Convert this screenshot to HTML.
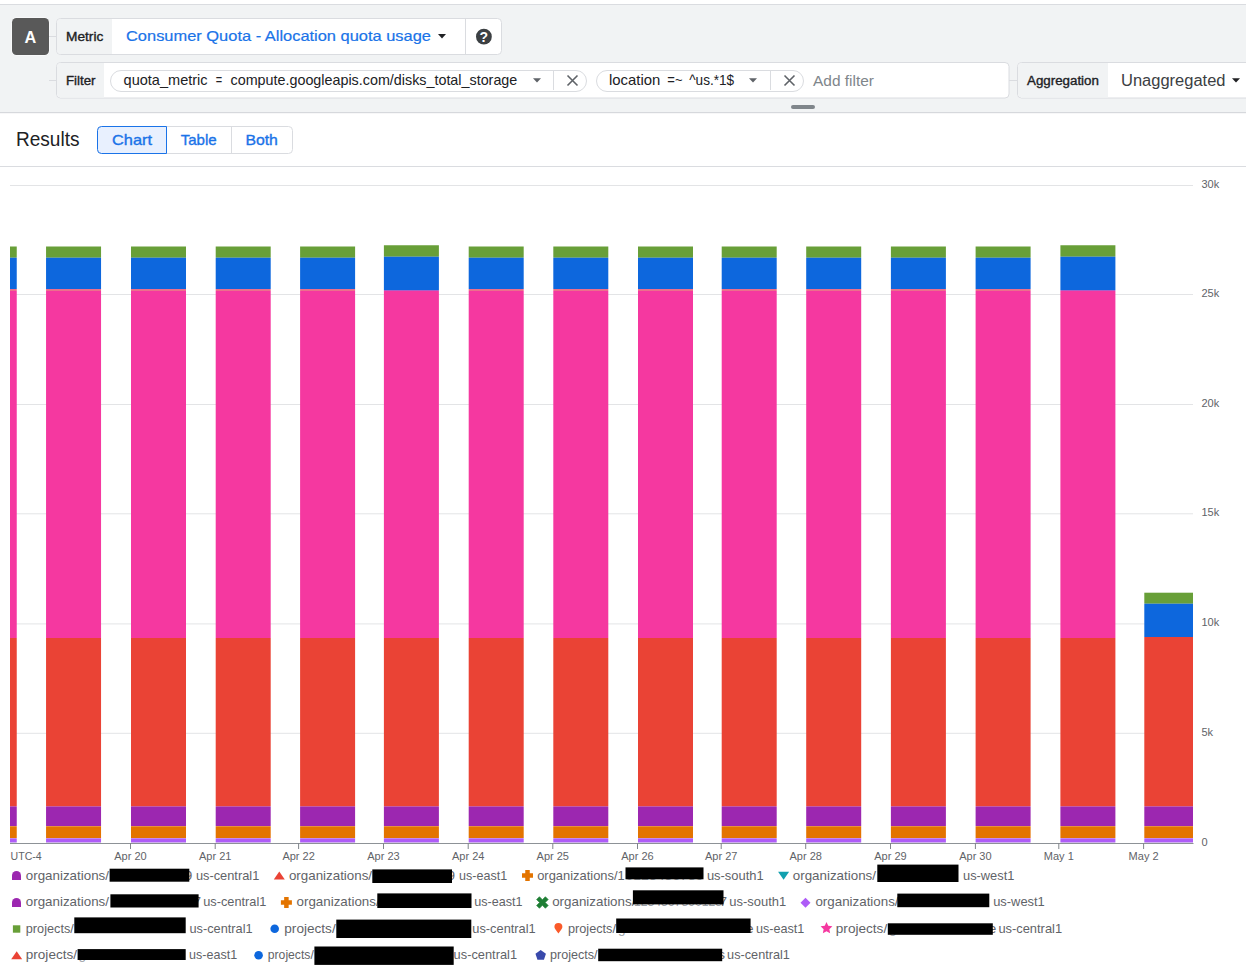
<!DOCTYPE html>
<html><head><meta charset="utf-8"><style>
html,body{margin:0;padding:0;background:#fff;width:1246px;height:969px;overflow:hidden}
svg{display:block;font-family:"Liberation Sans",sans-serif}
</style></head><body>
<svg width="1246" height="969" viewBox="0 0 1246 969">
<rect x="0" y="4" width="1246" height="1" fill="#dadce0" />
<rect x="0" y="5" width="1246" height="107" fill="#f1f3f4" />
<rect x="0" y="112" width="1246" height="1.2" fill="#d6d8dc" />
<rect x="11.5" y="17.5" width="38" height="38" rx="5" fill="#ffffff"/>
<rect x="12" y="18" width="37" height="37" fill="#595959" rx="4.5" />
<text x="30.4" y="42.7" font-size="16.3" fill="#ffffff" font-weight="700" text-anchor="middle">A</text>
<rect x="49" y="36" width="7" height="1" fill="#dadce0" />
<rect x="49" y="80" width="7" height="1" fill="#dadce0" />
<rect x="1009" y="80" width="8" height="1" fill="#dadce0" />
<rect x="56.5" y="18.5" width="445" height="36" rx="4" fill="#ffffff" stroke="#dadce0" stroke-width="1"/>
<path d="M61 19 H112 V54 H61 a4 4 0 0 1 -4 -4 V23 a4 4 0 0 1 4 -4z" fill="#f1f3f4"/>
<text x="66" y="41" font-size="12.6" fill="#202124" stroke="#202124" stroke-width="0.35" textLength="37.3" lengthAdjust="spacingAndGlyphs">Metric</text>
<text x="126" y="40.9" font-size="15" fill="#1a73e8" stroke="#1a73e8" stroke-width="0.2" textLength="305" lengthAdjust="spacingAndGlyphs">Consumer Quota - Allocation quota usage</text>
<path d="M438 34 L446 34 L442 38.5 Z" fill="#202124"/>
<rect x="465" y="19" width="1" height="35" fill="#dadce0" />
<circle cx="483.9" cy="36.7" r="7.9" fill="#3c4043"/>
<text x="483.9" y="42.3" font-size="14" fill="#ffffff" font-weight="700" text-anchor="middle">?</text>
<rect x="56.5" y="62.5" width="952.5" height="35.5" rx="4" fill="#ffffff" stroke="#dadce0" stroke-width="1"/>
<path d="M61 63 H104 V97.5 H61 a4 4 0 0 1 -4 -4 V67 a4 4 0 0 1 4 -4z" fill="#f1f3f4"/>
<text x="66" y="85.2" font-size="12.3" fill="#202124" stroke="#202124" stroke-width="0.35" textLength="29.5" lengthAdjust="spacingAndGlyphs">Filter</text>
<rect x="110.5" y="70.5" width="476" height="21" rx="10.5" fill="#ffffff" stroke="#dadce0" stroke-width="1"/>
<text x="123.6" y="84.7" font-size="14.4" fill="#202124" textLength="84" lengthAdjust="spacingAndGlyphs">quota_metric</text>
<text x="215.8" y="84.7" font-size="14.4" fill="#202124" textLength="6.4" lengthAdjust="spacingAndGlyphs">=</text>
<text x="230.5" y="84.7" font-size="14.4" fill="#202124" textLength="286.8" lengthAdjust="spacingAndGlyphs">compute.googleapis.com/disks_total_storage</text>
<path d="M533 78.3 L541 78.3 L537 82.6 Z" fill="#5f6368"/>
<rect x="553" y="71" width="1" height="19" fill="#dadce0" />
<path d="M567.5 75.5 L577.5 85.5 M577.5 75.5 L567.5 85.5" stroke="#5f6368" stroke-width="1.6"/>
<rect x="596.5" y="70.5" width="207" height="21" rx="10.5" fill="#ffffff" stroke="#dadce0" stroke-width="1"/>
<text x="609" y="84.7" font-size="14.4" fill="#202124" textLength="51.3" lengthAdjust="spacingAndGlyphs">location</text>
<text x="667.3" y="84.7" font-size="14.4" fill="#202124" textLength="15.2" lengthAdjust="spacingAndGlyphs">=~</text>
<text x="689.2" y="84.7" font-size="14.4" fill="#202124" textLength="45" lengthAdjust="spacingAndGlyphs">^us.*1$</text>
<path d="M749 78.3 L757 78.3 L753 82.6 Z" fill="#5f6368"/>
<rect x="770" y="71" width="1" height="19" fill="#dadce0" />
<path d="M784.5 75.5 L794.5 85.5 M794.5 75.5 L784.5 85.5" stroke="#5f6368" stroke-width="1.6"/>
<text x="813" y="85.5" font-size="15.4" fill="#80868b" textLength="61" lengthAdjust="spacingAndGlyphs">Add filter</text>
<rect x="1017.5" y="62.5" width="300" height="35.5" rx="4" fill="#ffffff" stroke="#dadce0" stroke-width="1"/>
<path d="M1022 63 H1108 V97.5 H1022 a4 4 0 0 1 -4 -4 V67 a4 4 0 0 1 4 -4z" fill="#f1f3f4"/>
<text x="1027" y="85.2" font-size="12.3" fill="#202124" stroke="#202124" stroke-width="0.35" textLength="71.9" lengthAdjust="spacingAndGlyphs">Aggregation</text>
<text x="1121" y="86.2" font-size="16" fill="#3c4043" textLength="104.5" lengthAdjust="spacingAndGlyphs">Unaggregated</text>
<path d="M1232 78.3 L1240 78.3 L1236 82.6 Z" fill="#202124"/>
<rect x="791" y="105" width="24" height="4" fill="#80868b" rx="2" />
<text x="16" y="146" font-size="19.5" fill="#202124" textLength="63.5" lengthAdjust="spacingAndGlyphs">Results</text>
<rect x="97.5" y="126.5" width="195" height="27" rx="4" fill="#ffffff" stroke="#dadce0" stroke-width="1"/>
<rect x="231" y="127" width="1" height="26" fill="#dadce0" />
<path d="M101.5 126.5 H166.5 V153.5 H101.5 a4 4 0 0 1 -4 -4 V130.5 a4 4 0 0 1 4 -4z" fill="#e8f0fe" stroke="#1a73e8" stroke-width="1"/>
<text x="112" y="145" font-size="14.8" fill="#1a73e8" stroke="#1a73e8" stroke-width="0.35" textLength="40" lengthAdjust="spacingAndGlyphs">Chart</text>
<text x="180.7" y="145" font-size="14.8" fill="#1a73e8" stroke="#1a73e8" stroke-width="0.35" textLength="36" lengthAdjust="spacingAndGlyphs">Table</text>
<text x="245.4" y="145" font-size="14.8" fill="#1a73e8" stroke="#1a73e8" stroke-width="0.35" textLength="32.5" lengthAdjust="spacingAndGlyphs">Both</text>
<rect x="0" y="166" width="1246" height="1" fill="#dadce0" />
<rect x="10" y="185.0" width="1183" height="1" fill="#e3e4e6" />
<rect x="10" y="294.0" width="1183" height="1" fill="#e3e4e6" />
<rect x="10" y="404.0" width="1183" height="1" fill="#e3e4e6" />
<rect x="10" y="513.3" width="1183" height="1" fill="#e3e4e6" />
<rect x="10" y="623.4" width="1183" height="1" fill="#e3e4e6" />
<rect x="10" y="732.8" width="1183" height="1" fill="#e3e4e6" />
<text x="1201.5" y="187.7" font-size="11" fill="#5f6368">30k</text>
<text x="1201.5" y="296.7" font-size="11" fill="#5f6368">25k</text>
<text x="1201.5" y="406.7" font-size="11" fill="#5f6368">20k</text>
<text x="1201.5" y="516.0" font-size="11" fill="#5f6368">15k</text>
<text x="1201.5" y="626.1" font-size="11" fill="#5f6368">10k</text>
<text x="1201.5" y="735.5" font-size="11" fill="#5f6368">5k</text>
<text x="1201.5" y="845.6" font-size="11" fill="#5f6368">0</text>
<defs><clipPath id="plot"><rect x="10" y="167" width="1183" height="676"/></clipPath></defs>
<g clip-path="url(#plot)">
<defs><linearGradient id="gN" gradientUnits="userSpaceOnUse" x1="0" y1="246.5" x2="0" y2="843"><stop offset="0.00000" stop-color="#689f38"/><stop offset="0.01760" stop-color="#689f38"/><stop offset="0.01760" stop-color="#6aa08c"/><stop offset="0.01928" stop-color="#6aa08c"/><stop offset="0.01928" stop-color="#0d67dd"/><stop offset="0.07158" stop-color="#0d67dd"/><stop offset="0.07158" stop-color="#ec6f8c"/><stop offset="0.07460" stop-color="#ec6f8c"/><stop offset="0.07460" stop-color="#f538a0"/><stop offset="0.65633" stop-color="#f538a0"/><stop offset="0.65633" stop-color="#ea4335"/><stop offset="0.93797" stop-color="#ea4335"/><stop offset="0.93797" stop-color="#c45aa8"/><stop offset="0.93931" stop-color="#c45aa8"/><stop offset="0.93931" stop-color="#9c27b0"/><stop offset="0.97150" stop-color="#9c27b0"/><stop offset="0.97150" stop-color="#e8903a"/><stop offset="0.97284" stop-color="#e8903a"/><stop offset="0.97284" stop-color="#e37400"/><stop offset="0.99162" stop-color="#e37400"/><stop offset="0.99162" stop-color="#c58af0"/><stop offset="0.99296" stop-color="#c58af0"/><stop offset="0.99296" stop-color="#ae5cf7"/><stop offset="0.99832" stop-color="#ae5cf7"/><stop offset="0.99832" stop-color="#cfaef0"/><stop offset="1.00000" stop-color="#cfaef0"/></linearGradient><linearGradient id="gT" gradientUnits="userSpaceOnUse" x1="0" y1="245.25" x2="0" y2="843"><stop offset="0.00000" stop-color="#689f38"/><stop offset="0.01798" stop-color="#689f38"/><stop offset="0.01798" stop-color="#6aa08c"/><stop offset="0.01966" stop-color="#6aa08c"/><stop offset="0.01966" stop-color="#0d67dd"/><stop offset="0.07403" stop-color="#0d67dd"/><stop offset="0.07403" stop-color="#a860c8"/><stop offset="0.07620" stop-color="#a860c8"/><stop offset="0.07620" stop-color="#f538a0"/><stop offset="0.65705" stop-color="#f538a0"/><stop offset="0.65705" stop-color="#ea4335"/><stop offset="0.93810" stop-color="#ea4335"/><stop offset="0.93810" stop-color="#c45aa8"/><stop offset="0.93944" stop-color="#c45aa8"/><stop offset="0.93944" stop-color="#9c27b0"/><stop offset="0.97156" stop-color="#9c27b0"/><stop offset="0.97156" stop-color="#e8903a"/><stop offset="0.97290" stop-color="#e8903a"/><stop offset="0.97290" stop-color="#e37400"/><stop offset="0.99164" stop-color="#e37400"/><stop offset="0.99164" stop-color="#c58af0"/><stop offset="0.99297" stop-color="#c58af0"/><stop offset="0.99297" stop-color="#ae5cf7"/><stop offset="0.99833" stop-color="#ae5cf7"/><stop offset="0.99833" stop-color="#cfaef0"/><stop offset="1.00000" stop-color="#cfaef0"/></linearGradient><linearGradient id="gM" gradientUnits="userSpaceOnUse" x1="0" y1="592.7" x2="0" y2="843"><stop offset="0.00000" stop-color="#689f38"/><stop offset="0.04115" stop-color="#689f38"/><stop offset="0.04115" stop-color="#6aa08c"/><stop offset="0.04515" stop-color="#6aa08c"/><stop offset="0.04515" stop-color="#0d67dd"/><stop offset="0.17539" stop-color="#0d67dd"/><stop offset="0.17539" stop-color="#ea4335"/><stop offset="0.85218" stop-color="#ea4335"/><stop offset="0.85218" stop-color="#c45aa8"/><stop offset="0.85537" stop-color="#c45aa8"/><stop offset="0.85537" stop-color="#9c27b0"/><stop offset="0.93208" stop-color="#9c27b0"/><stop offset="0.93208" stop-color="#e8903a"/><stop offset="0.93528" stop-color="#e8903a"/><stop offset="0.93528" stop-color="#e37400"/><stop offset="0.98002" stop-color="#e37400"/><stop offset="0.98002" stop-color="#c58af0"/><stop offset="0.98322" stop-color="#c58af0"/><stop offset="0.98322" stop-color="#ae5cf7"/><stop offset="0.99600" stop-color="#ae5cf7"/><stop offset="0.99600" stop-color="#cfaef0"/><stop offset="1.00000" stop-color="#cfaef0"/></linearGradient></defs>
<rect x="-38.25" y="246.5" width="55" height="596.5" fill="url(#gN)" />
<rect x="46.05" y="246.5" width="55" height="596.5" fill="url(#gN)" />
<rect x="131.0" y="246.5" width="55" height="596.5" fill="url(#gN)" />
<rect x="215.7" y="246.5" width="55" height="596.5" fill="url(#gN)" />
<rect x="300.1" y="246.5" width="55" height="596.5" fill="url(#gN)" />
<rect x="383.9" y="245.25" width="55" height="597.75" fill="url(#gT)" />
<rect x="468.7" y="246.5" width="55" height="596.5" fill="url(#gN)" />
<rect x="553.3" y="246.5" width="55" height="596.5" fill="url(#gN)" />
<rect x="638.0" y="246.5" width="55" height="596.5" fill="url(#gN)" />
<rect x="721.7" y="246.5" width="55" height="596.5" fill="url(#gN)" />
<rect x="806.2" y="246.5" width="55" height="596.5" fill="url(#gN)" />
<rect x="890.9" y="246.5" width="55" height="596.5" fill="url(#gN)" />
<rect x="975.6" y="246.5" width="55" height="596.5" fill="url(#gN)" />
<rect x="1060.4" y="245.25" width="55" height="597.75" fill="url(#gT)" />
<rect x="1144.3" y="592.7" width="55" height="250.3" fill="url(#gM)" />
</g>
<rect x="10" y="843" width="1183.5" height="1" fill="#8d9297" />
<rect x="130.0" y="843" width="1" height="6" fill="#80868b" />
<text x="130.5" y="860" font-size="11" fill="#5f6368" text-anchor="middle">Apr 20</text>
<rect x="214.7" y="843" width="1" height="6" fill="#80868b" />
<text x="215.2" y="860" font-size="11" fill="#5f6368" text-anchor="middle">Apr 21</text>
<rect x="298.1" y="843" width="1" height="6" fill="#80868b" />
<text x="298.6" y="860" font-size="11" fill="#5f6368" text-anchor="middle">Apr 22</text>
<rect x="383.0" y="843" width="1" height="6" fill="#80868b" />
<text x="383.5" y="860" font-size="11" fill="#5f6368" text-anchor="middle">Apr 23</text>
<rect x="467.7" y="843" width="1" height="6" fill="#80868b" />
<text x="468.2" y="860" font-size="11" fill="#5f6368" text-anchor="middle">Apr 24</text>
<rect x="552.3" y="843" width="1" height="6" fill="#80868b" />
<text x="552.8" y="860" font-size="11" fill="#5f6368" text-anchor="middle">Apr 25</text>
<rect x="637.0" y="843" width="1" height="6" fill="#80868b" />
<text x="637.5" y="860" font-size="11" fill="#5f6368" text-anchor="middle">Apr 26</text>
<rect x="720.7" y="843" width="1" height="6" fill="#80868b" />
<text x="721.2" y="860" font-size="11" fill="#5f6368" text-anchor="middle">Apr 27</text>
<rect x="805.2" y="843" width="1" height="6" fill="#80868b" />
<text x="805.7" y="860" font-size="11" fill="#5f6368" text-anchor="middle">Apr 28</text>
<rect x="890.0" y="843" width="1" height="6" fill="#80868b" />
<text x="890.5" y="860" font-size="11" fill="#5f6368" text-anchor="middle">Apr 29</text>
<rect x="974.9" y="843" width="1" height="6" fill="#80868b" />
<text x="975.4" y="860" font-size="11" fill="#5f6368" text-anchor="middle">Apr 30</text>
<rect x="1058.3" y="843" width="1" height="6" fill="#80868b" />
<text x="1058.8" y="860" font-size="11" fill="#5f6368" text-anchor="middle">May 1</text>
<rect x="1143.1" y="843" width="1" height="6" fill="#80868b" />
<text x="1143.6" y="860" font-size="11" fill="#5f6368" text-anchor="middle">May 2</text>
<text x="10.6" y="860" font-size="11" fill="#5f6368" textLength="31.1" lengthAdjust="spacingAndGlyphs">UTC-4</text>
<path d="M12.0 880.0 V875.5 a4.5 4.5 0 0 1 9 0 V880.0 Z" fill="#9c27b0"/>
<text x="25.8" y="880" font-size="13.5" fill="#5f6368" textLength="83.2" lengthAdjust="spacingAndGlyphs">organizations/</text>
<text x="184.8" y="880" font-size="13.5" fill="#5f6368">9</text>
<rect x="109.6" y="868.7" width="79.7" height="13.0" fill="#000000" />
<text x="195.9" y="880" font-size="13.5" fill="#5f6368" textLength="63.4" lengthAdjust="spacingAndGlyphs">us-central1</text>
<path d="M273.8 879.6 L284.8 879.6 L279.3 871.6 Z" fill="#ea4335"/>
<text x="288.9" y="880" font-size="13.5" fill="#5f6368" textLength="83.2" lengthAdjust="spacingAndGlyphs">organizations/</text>
<text x="447.5" y="880" font-size="13.5" fill="#5f6368">9</text>
<rect x="372.3" y="869.4" width="79.7" height="13.6" fill="#000000" />
<text x="459.1" y="880" font-size="13.5" fill="#5f6368" textLength="48.1" lengthAdjust="spacingAndGlyphs">us-east1</text>
<path d="M525.25 869.9 h4.5 v3.25 h3.25 v4.5 h-3.25 v3.25 h-4.5 v-3.25 h-3.25 v-4.5 h3.25 Z" fill="#e37400"/>
<text x="537.2" y="880" font-size="13.5" fill="#5f6368" textLength="87.5" lengthAdjust="spacingAndGlyphs">organizations/1</text>
<text x="625.5" y="880" font-size="13.5" fill="#9aa0a6" textLength="78" lengthAdjust="spacingAndGlyphs">0123456789</text>
<rect x="625.5" y="867.4" width="78.0" height="11.9" fill="#000000" />
<text x="706.9" y="880" font-size="13.5" fill="#5f6368" textLength="56.8" lengthAdjust="spacingAndGlyphs">us-south1</text>
<path d="M778.1 871.8 L789.1 871.8 L783.6 879.8 Z" fill="#12a0af"/>
<text x="792.8" y="880" font-size="13.5" fill="#5f6368" textLength="83.2" lengthAdjust="spacingAndGlyphs">organizations/</text>
<rect x="877.3" y="864.6" width="81.2" height="17.4" fill="#000000" />
<text x="963.0" y="880" font-size="13.5" fill="#5f6368" textLength="51.4" lengthAdjust="spacingAndGlyphs">us-west1</text>
<path d="M12.0 907.0 V902.5 a4.5 4.5 0 0 1 9 0 V907.0 Z" fill="#9c27b0"/>
<text x="25.8" y="905.8" font-size="13.5" fill="#5f6368" textLength="83.2" lengthAdjust="spacingAndGlyphs">organizations/</text>
<text x="193.6" y="905.8" font-size="13.5" fill="#5f6368">7</text>
<rect x="110.4" y="894.3" width="88.2" height="13.2" fill="#000000" />
<text x="203.2" y="905.8" font-size="13.5" fill="#5f6368" textLength="63.2" lengthAdjust="spacingAndGlyphs">us-central1</text>
<path d="M284.15 896.9 h4.5 v3.25 h3.25 v4.5 h-3.25 v3.25 h-4.5 v-3.25 h-3.25 v-4.5 h3.25 Z" fill="#e37400"/>
<text x="296.5" y="905.8" font-size="13.5" fill="#5f6368" textLength="83.2" lengthAdjust="spacingAndGlyphs">organizations/</text>
<rect x="377.3" y="893.4" width="94.2" height="14.6" fill="#000000" />
<text x="474.3" y="905.8" font-size="13.5" fill="#5f6368" textLength="48.3" lengthAdjust="spacingAndGlyphs">us-east1</text>
<path transform="translate(542.4,902.5) rotate(45)" d="M-2 -6.2 h4 v4.2 h4.2 v4 h-4.2 v4.2 h-4 v-4.2 h-4.2 v-4 h4.2 Z" fill="#1e7e34" stroke="#1e7e34" stroke-width="0.6" stroke-linejoin="round"/>
<text x="552.2" y="905.8" font-size="13.5" fill="#5f6368" textLength="83.2" lengthAdjust="spacingAndGlyphs">organizations/</text>
<text x="719.5" y="905.8" font-size="13.5" fill="#5f6368">7</text>
<text x="634" y="905.8" font-size="13.5" fill="#9aa0a6" textLength="88" lengthAdjust="spacingAndGlyphs">1234567890123</text>
<rect x="632.9" y="890.3" width="90.6" height="14.1" fill="#000000" />
<text x="729.3" y="905.8" font-size="13.5" fill="#5f6368" textLength="57" lengthAdjust="spacingAndGlyphs">us-south1</text>
<path d="M805.5 897.8 L810.5 902.8 L805.5 907.8 L800.5 902.8 Z" fill="#ae5cf7"/>
<text x="815.4" y="905.8" font-size="13.5" fill="#5f6368" textLength="83.2" lengthAdjust="spacingAndGlyphs">organizations/</text>
<rect x="897.3" y="893.6" width="92.0" height="13.6" fill="#000000" />
<text x="993.2" y="905.8" font-size="13.5" fill="#5f6368" textLength="51.6" lengthAdjust="spacingAndGlyphs">us-west1</text>
<rect x="12.900000000000002" y="925.3" width="7.4" height="7.4" fill="#689f38" />
<text x="25.8" y="932.7" font-size="13.5" fill="#5f6368" textLength="48" lengthAdjust="spacingAndGlyphs">projects/</text>
<rect x="74.3" y="917.4" width="111.4" height="15.8" fill="#000000" />
<text x="189.5" y="932.7" font-size="13.5" fill="#5f6368" textLength="63.1" lengthAdjust="spacingAndGlyphs">us-central1</text>
<circle cx="274.7" cy="928.8" r="4.3" fill="#0d67dd"/>
<text x="284.3" y="932.7" font-size="13.5" fill="#5f6368" textLength="51.4" lengthAdjust="spacingAndGlyphs">projects/</text>
<rect x="336.3" y="919.6" width="135.0" height="18.4" fill="#000000" />
<text x="472.3" y="932.7" font-size="13.5" fill="#5f6368" textLength="63.4" lengthAdjust="spacingAndGlyphs">us-central1</text>
<path d="M558.4 933.5 C556.4 930.5 554.4 928.5 554.4 927.0 a4 4 0 0 1 8 0 C562.4 928.5 560.4 930.5 558.4 933.5 Z" fill="#fa5a2a"/>
<text x="568.0" y="932.7" font-size="13.5" fill="#5f6368" textLength="48" lengthAdjust="spacingAndGlyphs">projects/</text>
<text x="746.1" y="932.7" font-size="13.5" fill="#5f6368">e</text>
<text x="618" y="932.7" font-size="13.5" fill="#9aa0a6">g</text>
<rect x="616.2" y="918.5" width="134.4" height="14.5" fill="#000000" />
<text x="755.9" y="932.7" font-size="13.5" fill="#5f6368" textLength="48.4" lengthAdjust="spacingAndGlyphs">us-east1</text>
<polygon points="826.50,922.00 828.26,925.77 832.40,926.28 829.35,929.13 830.14,933.22 826.50,931.20 822.86,933.22 823.65,929.13 820.60,926.28 824.74,925.77" fill="#f538a0"/>
<text x="835.8" y="932.7" font-size="13.5" fill="#5f6368" textLength="51.4" lengthAdjust="spacingAndGlyphs">projects/</text>
<text x="988.8" y="932.7" font-size="13.5" fill="#5f6368">e</text>
<text x="889" y="932.7" font-size="13.5" fill="#9aa0a6">g</text>
<rect x="887.8" y="923.3" width="105.0" height="11.5" fill="#000000" />
<text x="998.4" y="932.7" font-size="13.5" fill="#5f6368" textLength="63.7" lengthAdjust="spacingAndGlyphs">us-central1</text>
<path d="M11.2 959.2 L22.2 959.2 L16.7 951.2 Z" fill="#ea4335"/>
<text x="25.8" y="959" font-size="13.5" fill="#5f6368" textLength="51.2" lengthAdjust="spacingAndGlyphs">projects/</text>
<text x="78.5" y="959" font-size="13.5" fill="#9aa0a6">g</text>
<rect x="77.6" y="949.1" width="108.1" height="10.9" fill="#000000" />
<text x="189.1" y="959" font-size="13.5" fill="#5f6368" textLength="48.1" lengthAdjust="spacingAndGlyphs">us-east1</text>
<circle cx="258.6" cy="955.2" r="4.3" fill="#0d67dd"/>
<text x="267.8" y="959" font-size="13.5" fill="#5f6368" textLength="46" lengthAdjust="spacingAndGlyphs">projects/</text>
<rect x="314.4" y="946.5" width="139.3" height="18.4" fill="#000000" />
<text x="453.6" y="959" font-size="13.5" fill="#5f6368" textLength="63.5" lengthAdjust="spacingAndGlyphs">us-central1</text>
<polygon points="540.70,949.90 545.93,953.70 543.93,959.85 537.47,959.85 535.47,953.70" fill="#3949ab"/>
<text x="550.0" y="959" font-size="13.5" fill="#5f6368" textLength="47.6" lengthAdjust="spacingAndGlyphs">projects/</text>
<text x="718.2" y="959" font-size="13.5" fill="#5f6368">s</text>
<rect x="598.2" y="948.7" width="124.0" height="12.5" fill="#000000" />
<text x="727.1" y="959" font-size="13.5" fill="#5f6368" textLength="62.8" lengthAdjust="spacingAndGlyphs">us-central1</text>
</svg>
</body></html>
